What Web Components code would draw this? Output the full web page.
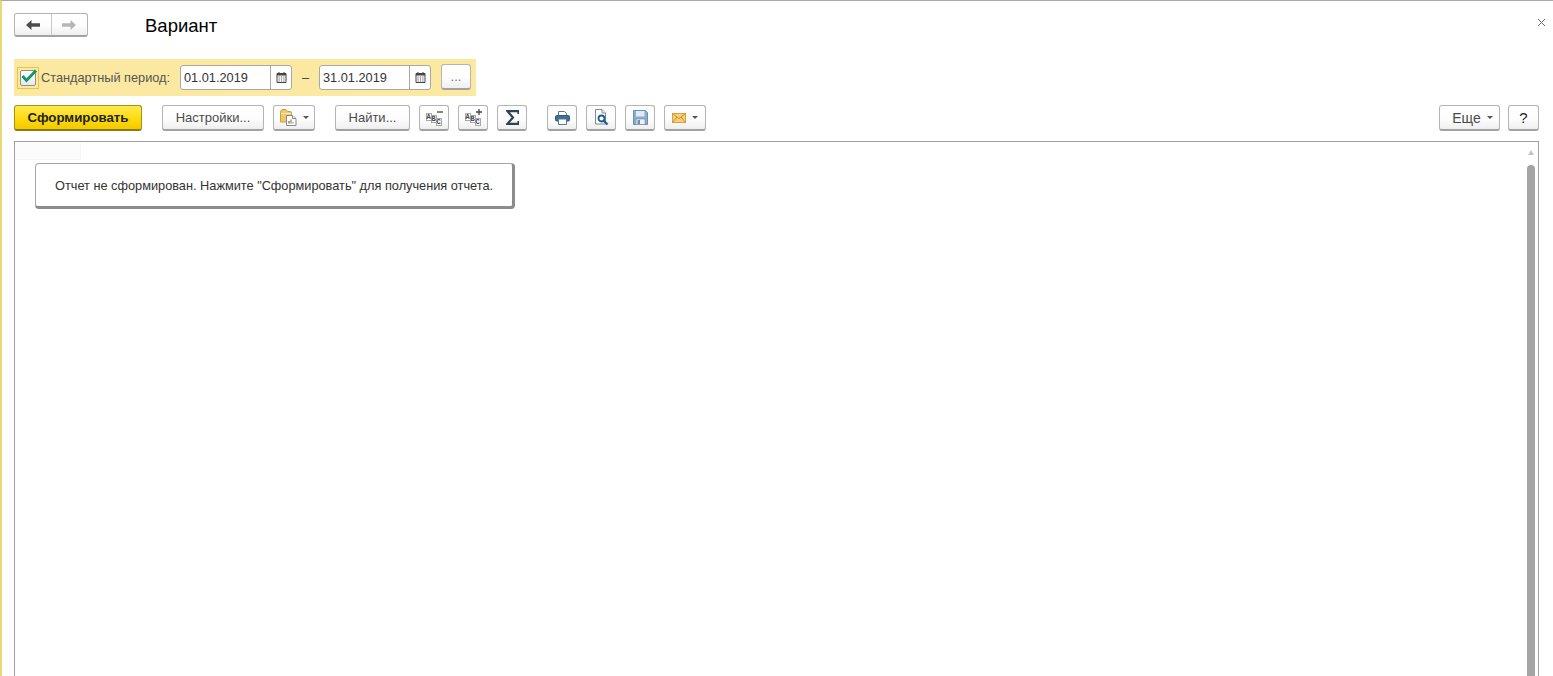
<!DOCTYPE html>
<html lang="ru">
<head>
<meta charset="utf-8">
<title>Вариант</title>
<style>
  html, body { margin: 0; height: 100%; overflow: hidden; background: #fff; }
  body { font: 12.75px "Liberation Sans", Arial, sans-serif; color: #333; }
  report-form { height: 676px; }
  svg { display: block; }
</style>
</head>
<body>
<template id="icons">
  <svg data-name="calendar" width="11" height="11" viewBox="0 0 11 11"><path d="M1 1.500h9v9H1z" fill="#fff" stroke="#444"/><path d="M1 1h9v2.500H1z" fill="#444"/><path d="M3 0v2M8 0v2" stroke="#444"/><path d="M2.500 5h1.200M4.900 5h1.200M7.300 5h1.200M2.500 7h1.200M4.900 7h1.200M7.300 7h1.200M2.500 9h1.200M4.900 9h1.200M7.300 9h1.200" stroke="#555"/></svg>
  <svg data-name="folder" width="17" height="17" viewBox="0 0 17 17"><path d="M.5 3.500Q.5 .5 3 .5h3l1.500 2H10q1.500 0 1.500 1.500V13H.5z" fill="#f0c866" stroke="#c99f3e"/><path d="M1 4.500h10" stroke="#fbeab8"/><path d="M6.500 6.500h6l3.500 3v7H6.500z" fill="#fff" stroke="#7f8b9a"/><path d="M12.500 6.500v3h3.500" fill="#e7ebf0" stroke="#7f8b9a"/><path d="M9 14.500v-2.500" stroke="#c9503c" stroke-width="1.300"/><path d="M11 14.500v-4" stroke="#7c9a4d" stroke-width="1.300"/><path d="M13 14.500v-1.500" stroke="#d89b3a" stroke-width="1.300"/></svg>
  <svg data-name="print" width="15" height="14" viewBox="0 0 15 14"><path d="M3.500.5h6l2 2V5h-8z" fill="#fff" stroke="#5b7690"/><rect x=".5" y="4.500" width="14" height="5.500" rx="1.200" fill="#3c7099" stroke="#35597a"/><path d="M3.500 8h8v5.500h-8z" fill="#fff" stroke="#5b7690"/></svg>
  <svg data-name="preview" width="15" height="17" viewBox="0 0 15 17"><path d="M1.500 .5h6.500l3.500 3.500v11H1.500z" fill="#fff" stroke="#7f8a96"/><path d="M8 .5v3.500h3.500" fill="#eef1f4" stroke="#7f8a96"/><circle cx="7.500" cy="9.500" r="3" fill="#fff" stroke="#1d5f8c" stroke-width="1.800"/><path d="M9.800 11.800l3.700 3.700" stroke="#1d5f8c" stroke-width="2.300"/></svg>
  <svg data-name="save" width="15" height="15" viewBox="0 0 15 15"><path d="M.5.5h12l2 2v12H.5z" fill="#8dadcd" stroke="#6b8fb2"/><rect x="3" y="1" width="8.500" height="5.500" fill="#dfe9f3"/><rect x="3" y="9" width="9" height="5.500" fill="#eef2f6" stroke="#6487a8" stroke-width=".6"/><rect x="4.500" y="10" width="2.500" height="4" fill="#6b8fb2"/></svg>
  <svg data-name="mail" width="14" height="10" viewBox="0 0 14 10"><rect x=".5" y=".5" width="13" height="9" fill="#f6cf7c" stroke="#d9a33f"/><path d="M.5 .5l6.500 5 6.500-5M.5 9.500l4.500-5.500M13.500 9.500L9 4" fill="none" stroke="#d08f2a"/></svg>
  <svg data-name="back" width="14" height="10" viewBox="0 0 14 10"><path d="M0 5l5.500-5v3.300H14v3.400H5.500V10z" fill="#4d4d4d"/></svg>
  <svg data-name="forward" width="14" height="10" viewBox="0 0 14 10"><path d="M14 5L8.500 0v3.300H0v3.400h8.500V10z" fill="#b5b5b5"/></svg>
  <svg data-name="sigma" width="13" height="15" viewBox="0 0 13 15"><path d="M12.500 4V1.200H1.500L7 7.500l-5.500 6.300h11V11" fill="none" stroke="#2d4358" stroke-width="2.200"/></svg>
</template>

<report-form></report-form>

<script>
const iconSource = document.getElementById('icons').content;

function icon(name) {
  return iconSource.querySelector(`[data-name="${name}"]`).outerHTML;
}

// text on the abc buttons stays real text, the small sign beside it differs
function abcIcon(sign) {
  const signPath = sign === 'plus' ? 'M14 0v6M11 3h6' : 'M11 3h6';
  return `<span class="abc">
    <span style="left:0;top:4px">A</span><span style="left:5px;top:6px">B</span><span style="left:10px;top:9px">C</span>
    <svg width="17" height="8" viewBox="0 0 17 8"><path d="${signPath}" stroke="#444" stroke-width="1.300" fill="none"/></svg>
  </span>`;
}

class UiButton extends HTMLElement {
  constructor() {
    super();
    this.attachShadow({ mode: 'open' });
    this.shadowRoot.innerHTML = `
      <style>
        :host {
          display: inline-flex;
          box-sizing: border-box;
          height: 26px;
          align-items: center;
          justify-content: center;
          gap: 6px;
          flex: none;
          border: 1px solid #b4b4b4;
          border-bottom: 2px solid #a2a2a2;
          border-radius: 3px;
          background: linear-gradient(#fff 0%, #fdfdfd 55%, #efefef 100%);
          color: #4a4a4a;
          font-size: 13px;
        }
        :host([primary]) {
          border-color: #a98f14;
          border-bottom-color: #8f7a10;
          background: linear-gradient(#ffe94f 0%, #fbdc0e 55%, #f4c800 100%);
          color: #222;
          font-weight: bold;
          font-size: 13.25px;
        }
        .arrow {
          width: 0;
          height: 0;
          border: 3px solid transparent;
          border-top: 3px solid #555;
          border-bottom: 0;
        }
      </style>
      <slot></slot>
    `;
    if (this.hasAttribute('menu')) {
      const arrow = document.createElement('span');
      arrow.className = 'arrow';
      this.shadowRoot.appendChild(arrow);
    }
  }
}

class NavButtons extends HTMLElement {
  constructor() {
    super();
    this.attachShadow({ mode: 'open' });
    this.shadowRoot.innerHTML = `
      <style>
        :host {
          display: flex;
          box-sizing: border-box;
          width: 74px;
          height: 24px;
          border: 1px solid #b4b4b4;
          border-bottom: 2px solid #a2a2a2;
          border-radius: 3px;
          background: linear-gradient(#fff 0%, #fdfdfd 55%, #efefef 100%);
        }
        div { flex: 1; display: flex; align-items: center; justify-content: center; }
        div + div { border-left: 1px solid #c8c8c8; }
        svg { display: block; }
      </style>
      <div>${icon('back')}</div><div>${icon('forward')}</div>
    `;
  }
}

class DateInput extends HTMLElement {
  constructor() {
    super();
    this.attachShadow({ mode: 'open' });
    this.shadowRoot.innerHTML = `
      <style>
        :host {
          display: flex;
          box-sizing: border-box;
          width: 112px;
          height: 25px;
          flex: none;
          border: 1px solid #a8a8a8;
          border-radius: 3px;
          background: #fff;
          font-size: 12.75px;
          color: #333;
        }
        .value { flex: 1; padding-left: 3px; line-height: 23px; }
        .pick {
          width: 20px;
          display: flex;
          align-items: center;
          justify-content: center;
          border-left: 1px solid #a8a8a8;
        }
        svg { display: block; }
      </style>
      <span class="value"><slot></slot></span>
      <span class="pick">${icon('calendar')}</span>
    `;
  }
}

class PeriodBar extends HTMLElement {
  constructor() {
    super();
    this.attachShadow({ mode: 'open' });
    this.shadowRoot.innerHTML = `
      <style>
        :host {
          display: flex;
          box-sizing: border-box;
          align-items: center;
          width: 462px;
          height: 37px;
          padding: 0 5px 0 3px;
          background: #fce9a1;
          color: #555;
          font-size: 12.75px;
        }
        .focus {
          box-sizing: border-box;
          width: 22px;
          height: 22px;
          flex: none;
          display: flex;
          align-items: center;
          justify-content: center;
          border: 1px solid #f1c049;
        }
        .box {
          box-sizing: border-box;
          width: 16px;
          height: 16px;
          border: 1px solid #8f8f8f;
          border-radius: 2px;
          background: linear-gradient(#fff, #e9e9e9);
          position: relative;
        }
        .box svg { position: absolute; left: 0; top: -2px; overflow: visible; }
        .label { margin-left: 2px; width: 139px; flex: none; }
        .dash { width: 27px; text-align: center; flex: none; color: #444; }
        ::slotted(ui-button) { margin-left: 10px; margin-top: -2px; }
      </style>
      <span class="focus"><span class="box">
        <svg width="16" height="15" viewBox="0 0 16 15"><path d="M1.500 7l4 4.500L15 1.500" fill="none" stroke="#0e9a63" stroke-width="2.800"/></svg>
      </span></span>
      <span class="label">Стандартный период:</span>
      <slot name="from"></slot>
      <span class="dash">–</span>
      <slot name="to"></slot>
      <slot></slot>
    `;
  }
}

class ToolBar extends HTMLElement {
  constructor() {
    super();
    this.attachShadow({ mode: 'open' });
    this.shadowRoot.innerHTML = `
      <style>
        :host { display: flex; align-items: center; height: 26px; }
        .spring { flex: 1; }
      </style>
      <slot></slot>
      <span class="spring"></span>
      <slot name="end"></slot>
    `;
  }
}

class MessageBox extends HTMLElement {
  constructor() {
    super();
    this.attachShadow({ mode: 'open' });
    this.shadowRoot.innerHTML = `
      <style>
        :host {
          display: block;
          box-sizing: border-box;
          width: 480px;
          height: 46px;
          padding: 15px 0 0 19px;
          border: 1px solid #a6a6a6;
          border-right: 3px solid #8c8c8c;
          border-bottom: 3px solid #8c8c8c;
          border-radius: 4px;
          background: #fff;
          font-size: 12.75px;
          line-height: 14px;
          color: #333;
        }
      </style>
      <slot></slot>
    `;
  }
}

class ReportPanel extends HTMLElement {
  constructor() {
    super();
    this.attachShadow({ mode: 'open' });
    this.shadowRoot.innerHTML = `
      <style>
        :host {
          display: flex;
          flex: 1;
          min-height: 0;
          box-sizing: border-box;
          margin-top: 10px;
          border: 1px solid #a0a0a0;
          border-bottom: 0;
          background: #fff;
        }
        .sheet { flex: 1; min-width: 0; display: flex; flex-direction: column; }
        .tab { width: 65px; height: 17px; flex: none; background: #fcfcfc; border-right: 1px solid #f5f5f5; border-bottom: 1px solid #f5f5f5; }
        .content { margin: 3px 0 0 20px; }
        .scroll { width: 15px; flex: none; display: flex; flex-direction: column; align-items: center; box-sizing: border-box; }
        .up {
          width: 0;
          height: 0;
          margin-top: 8px;
          border: 3.500px solid transparent;
          border-bottom: 5px solid #c4c4c4;
          border-top: 0;
        }
        .thumb { width: 8px; flex: 1; margin-top: 10px; background: #a4a4a4; border-radius: 4px 4px 0 0; }
      </style>
      <div class="sheet">
        <div class="tab"></div>
        <div class="content"><slot></slot></div>
      </div>
      <div class="scroll"><span class="up"></span><span class="thumb"></span></div>
    `;
  }
}

class ReportForm extends HTMLElement {
  constructor() {
    super();
    this.attachShadow({ mode: 'open' });
    this.shadowRoot.innerHTML = `
      <style>
        :host {
          display: flex;
          flex-direction: column;
          box-sizing: border-box;
          padding: 12px 14px 0 12px;
          border-top: 1px solid #a8a8a8;
          border-left: 2px solid #e6d777;
          position: relative;
        }
        .head { display: flex; align-items: center; height: 24px; }
        h1 { margin: 2px 0 0 57px; font: 18.5px/24px "Liberation Sans", Arial, sans-serif; color: #000; }
        .close { position: absolute; top: 17px; right: 7px; width: 9px; height: 9px; }
        period-bar { margin-top: 22px; }
        tool-bar { margin-top: 9px; }
        svg { display: block; }
        .abc {
          position: relative;
          display: block;
          width: 17px;
          height: 17px;
          font: bold 7px/8px "Liberation Mono", monospace;
          color: #444;
        }
        .abc span {
          position: absolute;
          width: 6px;
          height: 8px;
          text-align: center;
          background: #fff;
          border: 1px solid #a9a9a9;
          box-sizing: border-box;
          line-height: 6px;
        }
        .abc svg { position: absolute; left: 0; top: 0; }
      </style>
      <div class="head">
        <nav-buttons></nav-buttons>
        <h1>Вариант</h1>
      </div>
      <svg class="close" viewBox="0 0 9 9"><path d="M1 1l7 7M8 1L1 8" stroke="#666"/></svg>
      <period-bar>
        <date-input slot="from">01.01.2019</date-input>
        <date-input slot="to">31.01.2019</date-input>
        <ui-button style="width:30px;color:#777">...</ui-button>
      </period-bar>
      <tool-bar>
        <ui-button primary style="width:128px">Сформировать</ui-button>
        <ui-button style="width:102px;margin-left:20px">Настройки...</ui-button>
        <ui-button menu style="width:42px;margin-left:9px">${icon('folder')}</ui-button>
        <ui-button style="width:75px;margin-left:20px">Найти...</ui-button>
        <ui-button style="width:30px;margin-left:9px">${abcIcon('minus')}</ui-button>
        <ui-button style="width:30px;margin-left:9px">${abcIcon('plus')}</ui-button>
        <ui-button style="width:30px;margin-left:9px">${icon('sigma')}</ui-button>
        <ui-button style="width:30px;margin-left:20px">${icon('print')}</ui-button>
        <ui-button style="width:30px;margin-left:9px">${icon('preview')}</ui-button>
        <ui-button style="width:30px;margin-left:9px">${icon('save')}</ui-button>
        <ui-button menu style="width:42px;margin-left:9px">${icon('mail')}</ui-button>
        <ui-button slot="end" menu style="width:61px;font-size:14px;padding-left:6px">Еще</ui-button>
        <ui-button slot="end" style="width:31px;margin-left:8px;color:#222;font-size:15px">?</ui-button>
      </tool-bar>
      <report-panel>
        <message-box>Отчет не сформирован. Нажмите "Сформировать" для получения отчета.</message-box>
      </report-panel>
    `;
  }
}

customElements.define('ui-button', UiButton);
customElements.define('nav-buttons', NavButtons);
customElements.define('date-input', DateInput);
customElements.define('period-bar', PeriodBar);
customElements.define('tool-bar', ToolBar);
customElements.define('message-box', MessageBox);
customElements.define('report-panel', ReportPanel);
customElements.define('report-form', ReportForm);
</script>
</body>
</html>
